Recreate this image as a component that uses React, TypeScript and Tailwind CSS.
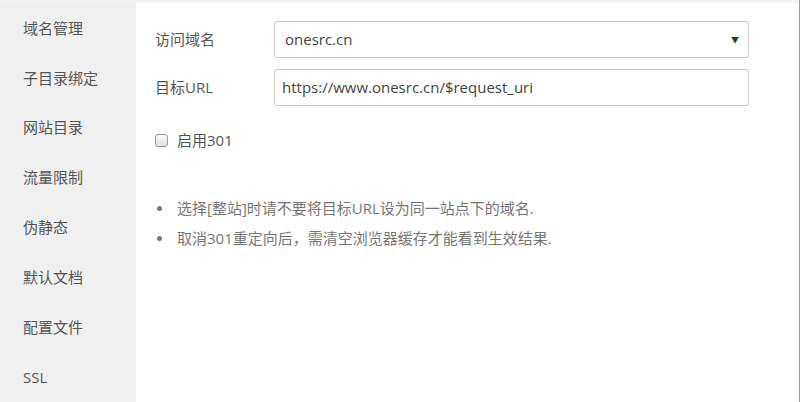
const menu = ["域名管理", "子目录绑定", "网站目录", "流量限制", "伪静态", "默认文档", "配置文件", "SSL"];

const font = { fontFamily: '"Open Sans", "Noto Sans CJK SC", sans-serif' };

export default function App() {
  return (
    <div
      className="w-[800px] h-[402px] flex bg-[#f2f2f2] pt-[3px] border-r border-[#9a9a9a] overflow-hidden"
      style={font}
    >
      <div className="w-[136px] shrink-0 bg-[#f0f0f0] flex flex-col">
        {menu.map((m) => (
          <div key={m} className="h-[50px] flex items-center pl-[23px] text-[15px] text-[#555]">
            {m}
          </div>
        ))}
      </div>

      <div className="flex-1 bg-white pl-[19px] pt-[18px]">
        <div className="flex items-center h-[37px]">
          <div className="w-[119px] text-[15px] text-[#555]">访问域名</div>
          <div className="w-[475px] h-[37px] border border-[#ccc] rounded-[3px] flex items-center justify-between pl-[10px] pr-[9px] text-[15px] text-[#444]">
            <span>onesrc.cn</span>
            <span className="text-[8px] text-[#333]">▼</span>
          </div>
        </div>

        <div className="flex items-center h-[37px] mt-[11px]">
          <div className="w-[119px] text-[15px] text-[#555]">目标URL</div>
          <div className="w-[475px] h-[37px] border border-[#ccc] rounded-[3px] flex items-center pl-[7px] text-[15px] text-[#444]">
            https://www.onesrc.cn/$request_uri
          </div>
        </div>

        <div className="flex items-center mt-[22px] h-[24px]">
          <div className="w-[13px] h-[13px] border border-[#999] rounded-[3px] bg-gradient-to-b from-[#fafafa] to-[#e0e0e0]" />
          <span className="ml-[9px] text-[15px] text-[#555]">启用301</span>
        </div>

        <ul className="mt-[47px] text-[15px] text-[#777] flex flex-col gap-[12px]">
          <li className="flex items-center h-[18px]">
            <span className="w-[5px] h-[5px] rounded-full bg-[#777] ml-[2px] mr-[15px]" />
            选择[整站]时请不要将目标URL设为同一站点下的域名.
          </li>
          <li className="flex items-center h-[18px]">
            <span className="w-[5px] h-[5px] rounded-full bg-[#777] ml-[2px] mr-[15px]" />
            取消301重定向后，需清空浏览器缓存才能看到生效结果.
          </li>
        </ul>
      </div>
    </div>
  );
}
